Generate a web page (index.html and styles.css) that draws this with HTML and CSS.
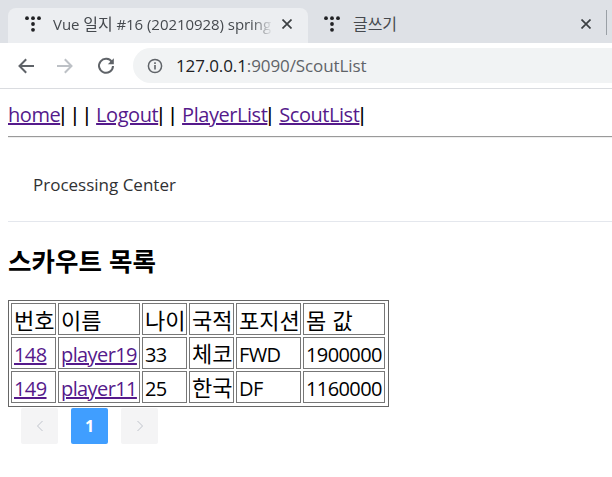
FILE: index.html
```html
<!DOCTYPE html>
<html lang="ko">
<head>
<meta charset="utf-8">
<title>ScoutList</title>
<link rel="stylesheet" href="styles.css">
</head>
<body>
<svg width="0" height="0" class="defs">
  <symbol id="fav" viewBox="0 0 16 16">
    <circle cx="2" cy="2.2" r="1.9"/><circle cx="8" cy="2.2" r="1.9"/><circle cx="14" cy="2.2" r="1.9"/>
    <circle cx="8" cy="8" r="1.9"/><circle cx="8" cy="13.8" r="1.9"/>
  </symbol>
  <symbol id="close" viewBox="0 0 10 10">
    <path d="M0.5 0.5 9.5 9.5M9.5 0.5 0.5 9.5" fill="none" stroke="#3c4043" stroke-width="1.7"/>
  </symbol>
</svg>
<header class="chrome">
  <div class="tabstrip">
    <div class="tab tab-active">
      <svg class="fav"><use href="#fav"/></svg>
      <span class="tab-title">Vue <span class="ko-tab">일지</span> #16 (20210928) spring</span>
      <svg class="close"><use href="#close"/></svg>
    </div>
    <div class="tab tab-idle">
      <svg class="fav"><use href="#fav"/></svg>
      <span class="tab-title"><span class="ko-tab">글쓰기</span></span>
      <svg class="close"><use href="#close"/></svg>
    </div>
    <div class="tab-sep"></div>
  </div>
  <div class="toolbar">
    <svg class="nav-icon" viewBox="0 0 18 18"><path d="M17 9H2.5M9.2 2.2 2.5 9l6.7 6.8" fill="none" stroke="#5f6368" stroke-width="2"/></svg>
    <svg class="nav-icon" viewBox="0 0 18 18"><path d="M1 9h14.5M8.8 2.2 15.5 9l-6.7 6.8" fill="none" stroke="#bdc1c6" stroke-width="2"/></svg>
    <svg class="nav-icon" viewBox="0 0 18 18"><path d="M15 5.2A7 7 0 1 0 16 9" fill="none" stroke="#5f6368" stroke-width="2"/><path d="M16.8 1.2v6h-6z" fill="#5f6368"/></svg>
    <div class="omnibox">
      <svg class="info" viewBox="0 0 16 16"><circle cx="8" cy="8" r="6.6" fill="none" stroke="#5f6368" stroke-width="1.5"/><path d="M8 7v4.5M8 4.2v1.7" stroke="#5f6368" stroke-width="1.6" fill="none"/></svg>
      <span class="url"><span class="host">127.0.0.1</span>:9090/ScoutList</span>
    </div>
  </div>
</header>
<main class="page">
  <nav class="links"><a href="#">home</a><span class="sep">| | | </span><a href="#">Logout</a><span class="sep">| | </span><a href="#">PlayerList</a><span class="sep">| </span><a href="#">ScoutList</a><span class="sep">|</span></nav>
  <hr class="rule-dark">
  <div class="menu-item">Processing Center</div>
  <hr class="rule-light">
  <h2 class="title">스카우트 목록</h2>
  <table class="list" border="1">
    <colgroup>
      <col class="c1"><col class="c2"><col class="c3"><col class="c4"><col class="c5"><col class="c6">
    </colgroup>
    <tr class="head"><td class="ko">번호</td><td class="ko">이름</td><td class="ko">나이</td><td class="ko">국적</td><td class="ko">포지션</td><td class="ko">몸 값</td></tr>
    <tr><td><a href="#">148</a></td><td><a href="#">player19</a></td><td>33</td><td class="ko">체코</td><td>FWD</td><td>1900000</td></tr>
    <tr><td><a href="#">149</a></td><td><a href="#">player11</a></td><td>25</td><td class="ko">한국</td><td>DF</td><td>1160000</td></tr>
  </table>
  <div class="pager">
    <button class="pg" type="button"><svg viewBox="0 0 8 12" class="chev"><path d="M6.5 1 1.5 6l5 5" fill="none" stroke="#c0c4cc" stroke-width="1"/></svg></button>
    <button class="pg pg-on" type="button">1</button>
    <button class="pg" type="button"><svg viewBox="0 0 8 12" class="chev"><path d="M1.5 1l5 5-5 5" fill="none" stroke="#c0c4cc" stroke-width="1"/></svg></button>
  </div>
</main>
</body>
</html>
```
FILE: styles.css
```css
* { box-sizing: border-box; }
html, body { margin: 0; height: 100%; overflow: hidden; background: #fff; }
body { font-family: "Open Sans", "Noto Sans CJK KR", sans-serif; color: #000; }
.defs { display: block; height: 0; }

.chrome { border-bottom: 1px solid #dadce0; }
.tabstrip {
  display: flex;
  height: 43px;
  padding: 8px 0 0 8px;
  background: #dee1e6;
  align-items: stretch;
}
.tab {
  display: flex;
  align-items: center;
  padding: 0 0 3px 17px;
  border-radius: 8px 8px 0 0;
  flex: none;
  color: #45494e;
  font-size: 15px;
  font-family: "Open Sans", "Noto Sans CJK KR", sans-serif;
}
.tab-active { background: #eceef1; width: 300px; }
.tab-idle { padding-left: 16px; width: 298px; }
.fav { width: 16px; height: 16px; flex: none; fill: #202124; }
.ko-tab { font-size: 16px; }
.tab-title {
  margin-left: 12px;
  width: 220px;
  line-height: 20px;
  white-space: nowrap;
  overflow: hidden;
  flex: none;
  letter-spacing: -0.05px;
  -webkit-mask-image: linear-gradient(to right, #000 90%, transparent 100%);
  mask-image: linear-gradient(to right, #000 90%, transparent 100%);
}
.tab-idle .tab-title { margin-left: 13px; width: 225px; mask-image: none; -webkit-mask-image: none; }
.close { width: 10px; height: 10px; margin-left: 9px; flex: none; }
.tab-idle .close { margin-left: 3px; }
.tab-sep { width: 1px; height: 25px; margin-top: 2px; background: #9aa0a6; flex: none; }

.toolbar {
  display: flex;
  align-items: center;
  height: 45px;
  padding: 0 0 0 17px;
  background: #fff;
}
.nav-icon { width: 18px; height: 18px; flex: none; margin-right: 22px; }
.nav-icon:nth-child(2) { margin-right: 23px; margin-left: -1px; }
.nav-icon:nth-child(3) { margin-right: 18px; }
.omnibox {
  display: flex;
  align-items: center;
  flex: 1;
  height: 35px;
  padding-left: 14px;
  background: #f1f3f4;
  border-radius: 17.5px 0 0 17.5px;
}
.info { width: 16px; height: 16px; flex: none; }
.url { margin-left: 13px; font-size: 17px; color: #5f6368; letter-spacing: -0.1px; }
.host { color: #202124; }

.page { padding: 0 0 0 8px; }
.links {
  font-size: 20px;
  line-height: 27px;
  height: 27px;
  margin-top: 12px;
  white-space: nowrap;
  letter-spacing: -0.45px;
}
.sep { font-family: "Liberation Sans", sans-serif; letter-spacing: 0.6px; white-space: pre; }
.links a, .list a { color: #551a8b; }
.rule-dark { margin: 8px 0 0; border: 0; border-top: 1px solid #9a9a9a; border-bottom: 1px solid #eee; }
.menu-item {
  height: 83px;
  line-height: 94px;
  padding-left: 25px;
  font-size: 17px;
  color: #303133;
}
.rule-light { margin: 0; border: 0; height: 1px; background: #e4e7ed; }
.title {
  margin: 23px 0 0;
  font-size: 25.5px;
  line-height: 30px;
  font-weight: 700;
  font-family: "Noto Sans CJK KR", sans-serif;
}
.list {
  margin-top: 25px;
  border-collapse: separate;
  border-spacing: 2px;
  table-layout: fixed;
  width: 381px;
  padding: 0 1px 1px 0;
  font-size: 20px;
  line-height: 26px;
  border: 1px solid #666;
  letter-spacing: -0.6px;
}
.list td { border: 1px solid #777; padding: 3px 2px 0; height: 32px; white-space: nowrap; overflow: visible; }
.list td.ko { padding: 0 2px 3px; font-size: 22px; letter-spacing: 0; font-family: "Noto Sans CJK KR", sans-serif; }
.list .head td.ko { padding: 1px 2px; }
.c1 { width: 45px; } .c2 { width: 82px; } .c3 { width: 45px; }
.c4 { width: 45px; } .c5 { width: 65px; } .c6 { width: 82px; }

.pager { display: flex; gap: 13px; margin: 1px 0 0 13px; }
.pg {
  width: 37px;
  height: 36px;
  padding: 0;
  border: 0;
  border-radius: 2px;
  background: #f4f4f5;
  display: flex;
  align-items: center;
  justify-content: center;
  font-family: "Open Sans", sans-serif;
  font-size: 16px;
  font-weight: 700;
}
.pg-on { background: #409eff; color: #fff; }
.chev { width: 8px; height: 12px; }
```
